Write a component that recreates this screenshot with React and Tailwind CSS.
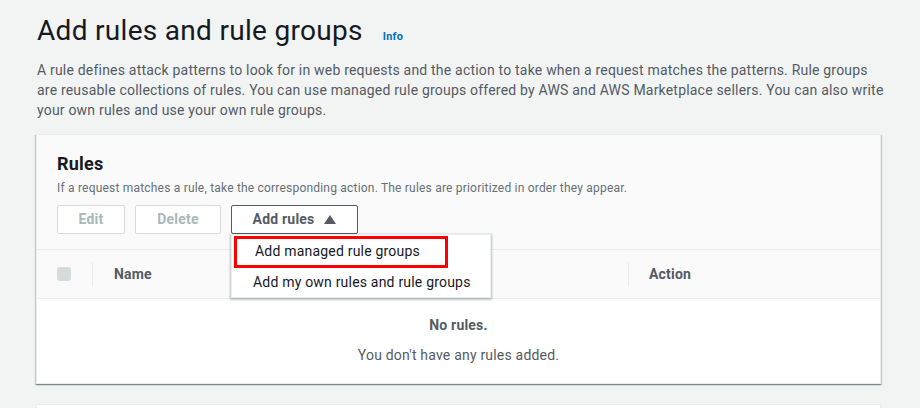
import React from 'react';

const font = { fontFamily: 'Roboto, "Liberation Sans", Arial, sans-serif' };

export default function App() {
  return (
    <div className="bg-[#f2f3f3] w-[920px] h-[408px] overflow-hidden text-[#16191f] tracking-[0.2px]" style={font}>
      <div className="pl-[37px] pr-[39px] pt-[13px]">
        <div className="flex items-end gap-[20px]">
          <h1 className="text-[28px] leading-[36px] font-normal text-[#16191f] tracking-[0.3px]">Add rules and rule groups</h1>
          <span className="text-[11px] font-bold text-[#0073bb] mb-[4px]">Info</span>
        </div>
        <p className="mt-[11px] text-[14px] leading-[20px] text-[#545b64] w-[850px]">
          A rule defines attack patterns to look for in web requests and the action to take when a request matches the patterns. Rule groups are reusable collections of rules. You can use managed rule groups offered by AWS and AWS Marketplace sellers. You can also write your own rules and use your own rule groups.
        </p>

        <div className="mt-[14px] w-[845px] -ml-[1px] border border-[#eaeded] shadow-[0_1px_1px_0_rgba(0,28,36,0.3),1px_1px_1px_0_rgba(0,28,36,0.15),-1px_1px_1px_0_rgba(0,28,36,0.15)] bg-white">
          <div className="bg-[#fafafa] px-[20px] pt-[17px] pb-[15px] relative">
            <h2 className="text-[18px] leading-[24px] font-bold">Rules</h2>
            <p className="text-[12px] leading-[16px] text-[#687078] mt-[4px]">If a request matches a rule, take the corresponding action. The rules are prioritized in order they appear.</p>
            <div className="flex gap-[10px] mt-[9px]">
              <button className="h-[29px] w-[68px] border border-[#d5dbdb] bg-white text-[#aab7b8] text-[14px] font-bold rounded-[2px]">Edit</button>
              <button className="h-[29px] w-[86px] border border-[#d5dbdb] bg-white text-[#aab7b8] text-[14px] font-bold rounded-[2px]">Delete</button>
              <div className="relative">
                <button className="h-[29px] w-[127px] border border-[#545b64] bg-white text-[#545b64] text-[14px] font-bold rounded-[2px] flex items-center justify-center gap-[10px]">
                  <span>Add rules</span>
                  <svg width="12" height="9" viewBox="0 0 12 9"><path d="M6 0 L12 9 L0 9 Z" fill="#545b64" /></svg>
                </button>
                <div className="absolute left-0 top-[29px] w-[260px] bg-white border border-[#eaeded] shadow-[0_1px_2px_1px_rgba(0,28,36,0.25)] z-10 text-[14px] text-[#16191f]">
                  <div className="h-[32px] flex items-start">
                    <div className="ml-[2px] mt-[1px] w-[214px] h-[32px] border-[3px] border-[#ff0000] flex items-center pl-[18px] pb-[2px]">Add managed rule groups</div>
                  </div>
                  <div className="h-[30px] flex items-center pl-[21px]">Add my own rules and rule groups</div>
                </div>
              </div>
            </div>
          </div>
          <div className="bg-[#fafafa] border-t border-[#eaeded] border-b h-[50px] flex items-center text-[14px] font-bold text-[#545b64]">
            <div className="w-[55px] flex items-center pl-[20px]">
              <div className="w-[14px] h-[14px] rounded-[3px] bg-[#d5dbdb]"></div>
            </div>
            <div className="w-[1px] h-[24px] bg-[#eaeded]"></div>
            <div className="w-[535px] pl-[21px]">Name</div>
            <div className="w-[1px] h-[24px] bg-[#eaeded]"></div>
            <div className="pl-[20px]">Action</div>
          </div>
          <div className="h-[84px] flex flex-col items-center pt-[16px] text-[14px] text-[#545b64]">
            <div className="font-bold leading-[20px]">No rules.</div>
            <div className="leading-[20px] mt-[10px]">You don&apos;t have any rules added.</div>
          </div>
        </div>

        <div className="mt-[20px] w-[845px] -ml-[1px] h-[40px] border border-[#eaeded] bg-white"></div>
      </div>
    </div>
  );
}
